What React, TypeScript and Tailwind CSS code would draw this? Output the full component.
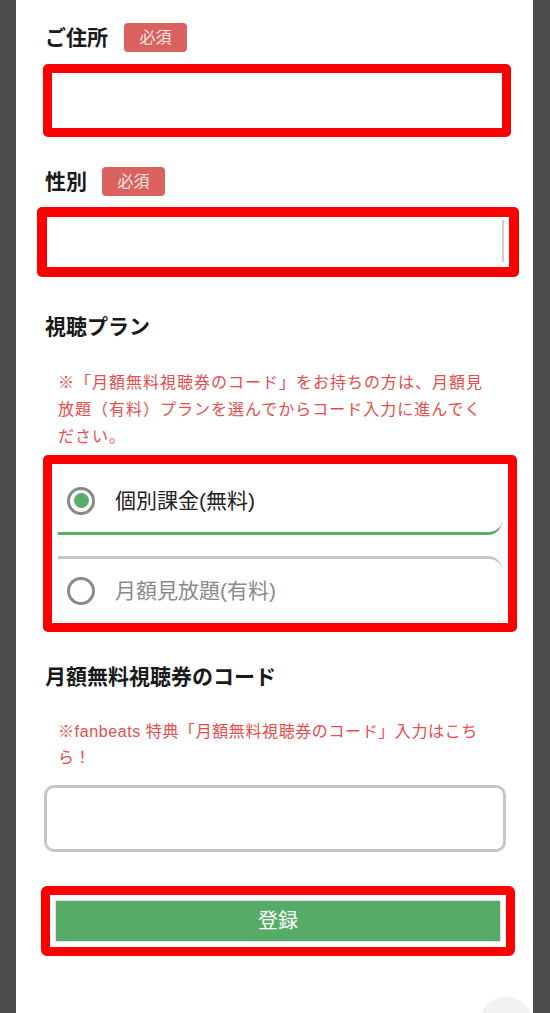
export default function App() {
  return (
    <div className="h-[1013px] overflow-hidden bg-[#4d4d4d] pl-[16px] pr-[17px] font-['Liberation_Sans','Noto_Sans_CJK_JP',sans-serif]">
      <div className="relative h-[1013px] overflow-hidden bg-white">
        <div className="flex flex-col">
          {/* Address */}
          <div className="mt-[23px] ml-[29px] flex h-[29px] items-center gap-[16px]">
            <span className="text-[21px] font-bold text-[#1a1a1a]">ご住所</span>
            <span className="flex h-[29px] w-[63px] items-center justify-center rounded-[4px] bg-[#d9625f] text-[16px] text-[#fbe4e3]">
              必須
            </span>
          </div>
          <div className="mt-[12px] ml-[27px] h-[73px] w-[468px] rounded-[5px] border-[9px] border-[#ff0000] bg-white"></div>

          {/* Gender */}
          <div className="mt-[30px] ml-[29px] flex h-[29px] items-center gap-[15px]">
            <span className="text-[21px] font-bold text-[#1a1a1a]">性別</span>
            <span className="flex h-[29px] w-[63px] items-center justify-center rounded-[4px] bg-[#d9625f] text-[16px] text-[#fbe4e3]">
              必須
            </span>
          </div>
          <div className="mt-[11px] ml-[21px] flex h-[70px] w-[482px] justify-end rounded-[5px] border-[10px] border-[#ff0000] bg-white py-[3px] pr-[5px]">
            <div className="mb-[2px] w-[2px] bg-[#cfcfcf]"></div>
          </div>

          {/* Plan */}
          <div className="mt-[35px] ml-[29px] flex h-[29px] items-center">
            <span className="text-[21px] font-bold text-[#1a1a1a]">視聴プラン</span>
          </div>
          <p className="mt-[28px] ml-[42px] text-[16px] leading-[27px] tracking-[1px] whitespace-nowrap text-[#ea4b4b]">
            ※「月額無料視聴券のコード」をお持ちの方は、月額見
            <br />
            放題（有料）プランを選んでからコード入力に進んでく
            <br />
            ださい。
          </p>
          <div className="mt-[5px] ml-[27px] h-[177px] w-[474px] overflow-hidden rounded-[5px] border-[9px] border-[#ff0000] bg-white px-[6px] pt-[5px]">
            <div className="flex h-[66px] items-center rounded-br-[14px] border-b-[3px] border-[#5aac6a] pl-[9px]">
              <span className="flex h-[28px] w-[28px] items-center justify-center rounded-full border-[3px] border-[#8a8a8a]">
                <span className="h-[15px] w-[15px] rounded-full bg-[#5aac6a]"></span>
              </span>
              <span className="ml-[20px] text-[21px] text-[#222]">個別課金(無料)</span>
            </div>
            <div className="mt-[21px] flex h-[72px] items-center rounded-tr-[14px] border-t-[3px] border-[#c8c8c8] pb-[6px] pl-[9px]">
              <span className="h-[28px] w-[28px] rounded-full border-[3px] border-[#8a8a8a]"></span>
              <span className="ml-[20px] text-[21px] text-[#8a8a8a]">月額見放題(有料)</span>
            </div>
          </div>

          {/* Code */}
          <div className="mt-[30px] ml-[29px] flex h-[29px] items-center">
            <span className="text-[21px] font-bold text-[#1a1a1a]">月額無料視聴券のコード</span>
          </div>
          <p className="mt-[28px] ml-[42px] text-[16px] leading-[26px] tracking-[0.6px] whitespace-nowrap text-[#ea4b4b]">
            ※fanbeats 特典「月額無料視聴券のコード」入力はこち
            <br />
            ら！
          </p>
          <div className="mt-[14px] ml-[28px] h-[67px] w-[462px] rounded-[10px] border-[3px] border-[#c6c6c6] bg-white"></div>

          {/* Submit */}
          <div className="mt-[34px] ml-[25px] w-[474px] rounded-[6px] border-[9px] border-[#ff0000] bg-white p-[5px]">
            <button className="flex h-[42px] w-full items-center justify-center border border-[#e2e2e2] bg-[#57ab69] text-[20px] text-white">
              登録
            </button>
          </div>
        </div>

        {/* scroll-to-top button */}
        <div className="absolute top-[997px] left-[462px] h-[56px] w-[56px] rounded-full bg-[#f1f1f1]"></div>
      </div>
    </div>
  );
}
